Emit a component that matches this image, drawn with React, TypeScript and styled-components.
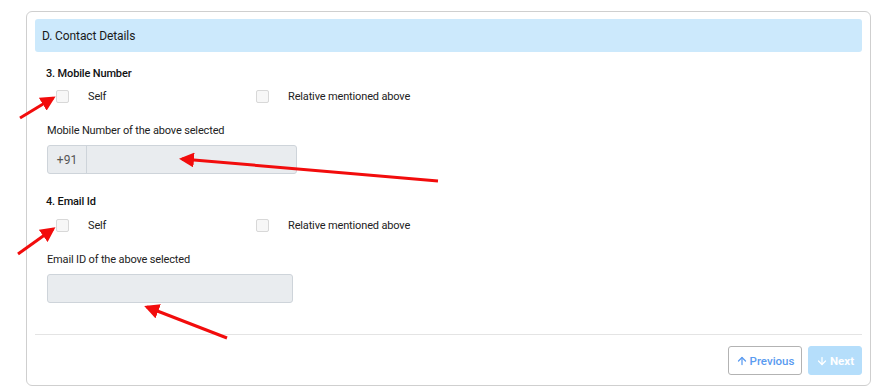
import React from "react";
import styled, { createGlobalStyle } from "styled-components";
import { ArrowUp, ArrowDown } from "lucide-react";

const GlobalStyle = createGlobalStyle`
  html, body {
    margin: 0;
    padding: 0;
    background: #ffffff;
    font-family: Roboto, "Liberation Sans", Arial, sans-serif;
    color: #222;
  }
`;

const Page = styled.div`
  position: relative;
  width: 878px;
  height: 390px;
  padding: 11px 0 0 26px;
  box-sizing: border-box;
`;

const Card = styled.div`
  width: 845px;
  height: 375px;
  box-sizing: border-box;
  border: 1px solid #cfcfcf;
  border-radius: 6px;
  padding: 7px 8px 0;
  display: flex;
  flex-direction: column;
`;

const Header = styled.div`
  height: 33px;
  background: #cce9fc;
  border-radius: 3px;
  display: flex;
  align-items: center;
  padding-left: 7px;
  font-size: 12px;
  letter-spacing: -0.1px;
  color: #1a1a1a;
`;

const Body = styled.div`
  padding: 0 12px;
  display: flex;
  flex-direction: column;
`;

const Question = styled.div<{ $mt: number }>`
  margin-top: ${(p) => p.$mt}px;
  margin-left: -1px;
  font-size: 11px;
  font-weight: 500;
  line-height: 14px;
  letter-spacing: -0.15px;
  color: #111;
`;

const OptionRow = styled.div<{ $mt: number }>`
  margin-top: ${(p) => p.$mt}px;
  padding-left: 9px;
  display: grid;
  grid-template-columns: 200px 200px;
  height: 13px;
`;

const Option = styled.label`
  display: flex;
  align-items: center;
  font-size: 11px;
  letter-spacing: -0.15px;
  color: #222;
  line-height: 13px;
`;

const Box = styled.span`
  width: 13px;
  height: 13px;
  box-sizing: border-box;
  border: 1px solid #d8d8d8;
  border-radius: 2px;
  background: #f7f7f7;
  margin-right: 19px;
`;

const FieldLabel = styled.div`
  margin-top: 21px;
  font-size: 11px;
  line-height: 14px;
  letter-spacing: -0.15px;
  color: #222;
`;

const InputGroup = styled.div<{ $w: number }>`
  margin-top: 7px;
  width: ${(p) => p.$w}px;
  height: 29px;
  box-sizing: border-box;
  display: flex;
  background: #e9ecef;
  border: 1px solid #ced4da;
  border-radius: 3px;
`;

const Prefix = styled.span`
  width: 38px;
  border-right: 1px solid #ced4da;
  display: flex;
  align-items: center;
  justify-content: center;
  font-size: 12px;
  color: #555;
`;

const Divider = styled.hr`
  margin: 31px 0 0;
  border: 0;
  border-top: 1px solid #e4e4e4;
  width: 100%;
`;

const Footer = styled.div`
  margin-top: 11px;
  display: flex;
  justify-content: flex-end;
  gap: 6px;
`;

const NavButton = styled.button<{ $primary?: boolean; $w: number }>`
  width: ${(p) => p.$w}px;
  height: 29px;
  box-sizing: border-box;
  border-radius: 3px;
  display: flex;
  align-items: center;
  justify-content: center;
  gap: 2px;
  font-family: Roboto, "Liberation Sans", Arial, sans-serif;
  font-size: 11.5px;
  font-weight: ${(p) => (p.$primary ? 700 : 500)};
  padding: 0;
  border: 1px solid ${(p) => (p.$primary ? "#b5defb" : "#b3b3b3")};
  background: ${(p) => (p.$primary ? "#b5defb" : "#ffffff")};
  color: ${(p) => (p.$primary ? "#ffffff" : "#5a9bf0")};
`;

const Annotations = styled.svg`
  position: absolute;
  left: 0;
  top: 0;
  pointer-events: none;
`;

const arrows = [
  { x1: 20, y1: 118, x2: 53, y2: 98 },
  { x1: 438, y1: 181, x2: 182, y2: 159 },
  { x1: 18, y1: 254, x2: 53, y2: 229 },
  { x1: 227, y1: 338, x2: 147, y2: 307 },
];

const ContactOptions = ({ mt }: { mt: number }) => (
  <OptionRow $mt={mt}>
    <Option>
      <Box />
      Self
    </Option>
    <Option>
      <Box />
      Relative mentioned above
    </Option>
  </OptionRow>
);

const App = () => {
  return (
    <Page>
      <GlobalStyle />
      <Card>
        <Header>D. Contact Details</Header>
        <Body>
          <Question $mt={15}>3. Mobile Number</Question>
          <ContactOptions mt={9} />
          <FieldLabel>Mobile Number of the above selected</FieldLabel>
          <InputGroup $w={250}>
            <Prefix>+91</Prefix>
          </InputGroup>
          <Question $mt={21}>4. Email Id</Question>
          <ContactOptions mt={10} />
          <FieldLabel>Email ID of the above selected</FieldLabel>
          <InputGroup $w={246} />
        </Body>
        <Divider />
        <Footer>
          <NavButton $w={74}>
            <ArrowUp size={12} strokeWidth={2.5} />
            Previous
          </NavButton>
          <NavButton $w={54} $primary>
            <ArrowDown size={12} strokeWidth={2.5} />
            Next
          </NavButton>
        </Footer>
      </Card>
      <Annotations width={878} height={390} viewBox="0 0 878 390">
        <defs>
          <marker
            id="head"
            markerWidth="5"
            markerHeight="5"
            refX="4"
            refY="2.5"
            orient="auto"
            markerUnits="strokeWidth"
          >
            <path d="M0,0 L5,2.5 L0,5 Z" fill="#f20c0c" />
          </marker>
        </defs>
        {arrows.map((a, i) => (
          <line
            key={i}
            x1={a.x1}
            y1={a.y1}
            x2={a.x2}
            y2={a.y2}
            stroke="#f20c0c"
            strokeWidth={3}
            markerEnd="url(#head)"
          />
        ))}
      </Annotations>
    </Page>
  );
};

export default App;
